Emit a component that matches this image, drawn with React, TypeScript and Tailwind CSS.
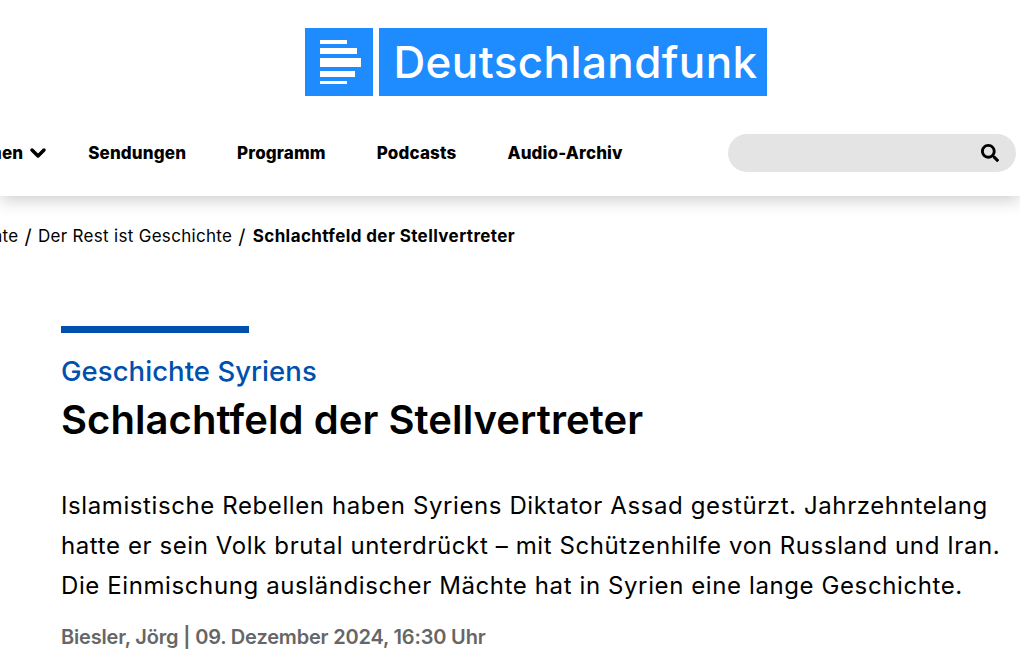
import { ChevronDown } from "lucide-react";
import { FaSearch } from "react-icons/fa";

const navItems = ["Sendungen", "Programm", "Podcasts", "Audio-Archiv"];

const Logo = () => (
  <a className="flex gap-[6px]">
    <div className="flex h-[68px] w-[68px] flex-col justify-center gap-[4px] bg-[#1e8cff] pl-[15px]">
      <div className="h-[4px] w-[27px] bg-white" />
      <div className="h-[6px] w-[37px] bg-white" />
      <div className="h-[9px] w-[41px] bg-white" />
      <div className="h-[6px] w-[35px] bg-white" />
      <div className="h-[3px] w-[27px] bg-white" />
    </div>
    <div className="flex h-[68px] w-[388px] items-center justify-center bg-[#1e8cff] pl-[5px] text-[44px] font-medium leading-none tracking-[0.4px] text-white">
      Deutschlandfunk
    </div>
  </a>
);

const Nav = () => (
  <nav className="flex h-[100px] items-start justify-between pr-[4px] pt-[38px]">
    <ul className="-ml-[47px] flex h-[38px] items-center gap-[51px] pt-[2px] text-[17px] font-extrabold tracking-[0.15px] text-black">
      <li className="-mr-[13px] flex items-center gap-[3px]">
        Themen
        <ChevronDown size={24} strokeWidth={3.5} className="-mt-[2px]" />
      </li>
      {navItems.map((item) => (
        <li key={item}>{item}</li>
      ))}
    </ul>
    <div className="flex h-[38px] w-[288px] items-center justify-end rounded-full bg-[#e4e4e4] pr-[17px]">
      <FaSearch size={18} className="text-black" />
    </div>
  </nav>
);

export default function App() {
  return (
    <div className="h-[669px] overflow-hidden bg-white font-['Inter',sans-serif] text-black">
      <header className="relative h-[196px] bg-white shadow-[0_4px_16px_rgba(0,0,0,0.2)]">
        <div className="flex justify-center pl-[52px] pt-[28px]">
          <Logo />
        </div>
        <Nav />
      </header>

      <div className="-ml-[75px] mt-[28px] flex h-[26px] items-center whitespace-nowrap text-[17px] tracking-[0.3px]">
        <span>Geschichte</span>
        <span className="mx-[6px] text-[20px]">/</span>
        <span>Der Rest ist Geschichte</span>
        <span className="ml-[6px] mr-[7px] text-[20px]">/</span>
        <span className="font-bold tracking-[0.4px]">Schlachtfeld der Stellvertreter</span>
      </div>

      <main className="pl-[61px] pt-[76px]">
        <div className="h-[7px] w-[188px] bg-[#0050ad]" />
        <p className="mt-[20px] text-[27.5px] font-medium leading-[36px] tracking-[0.05px] text-[#0050ad]">
          Geschichte Syriens
        </p>
        <h1 className="mt-[6px] text-[40px] font-semibold leading-[50px] tracking-[0.07px]">
          Schlachtfeld der Stellvertreter
        </h1>
        <p className="mt-[41px] w-[950px] text-[24px] leading-[40px] tracking-[0.6px]">
          Islamistische Rebellen haben Syriens Diktator Assad gestürzt. Jahrzehntelang hatte er sein Volk brutal
          unterdrückt – mit Schützenhilfe von Russland und Iran. Die Einmischung ausländischer Mächte hat in Syrien
          eine lange Geschichte.
        </p>
        <p className="mt-[17px] text-[20px] font-semibold leading-[28px] tracking-[-0.18px] text-[#666666]">
          Biesler, Jörg | 09. Dezember 2024, 16:30 Uhr
        </p>
      </main>
    </div>
  );
}
